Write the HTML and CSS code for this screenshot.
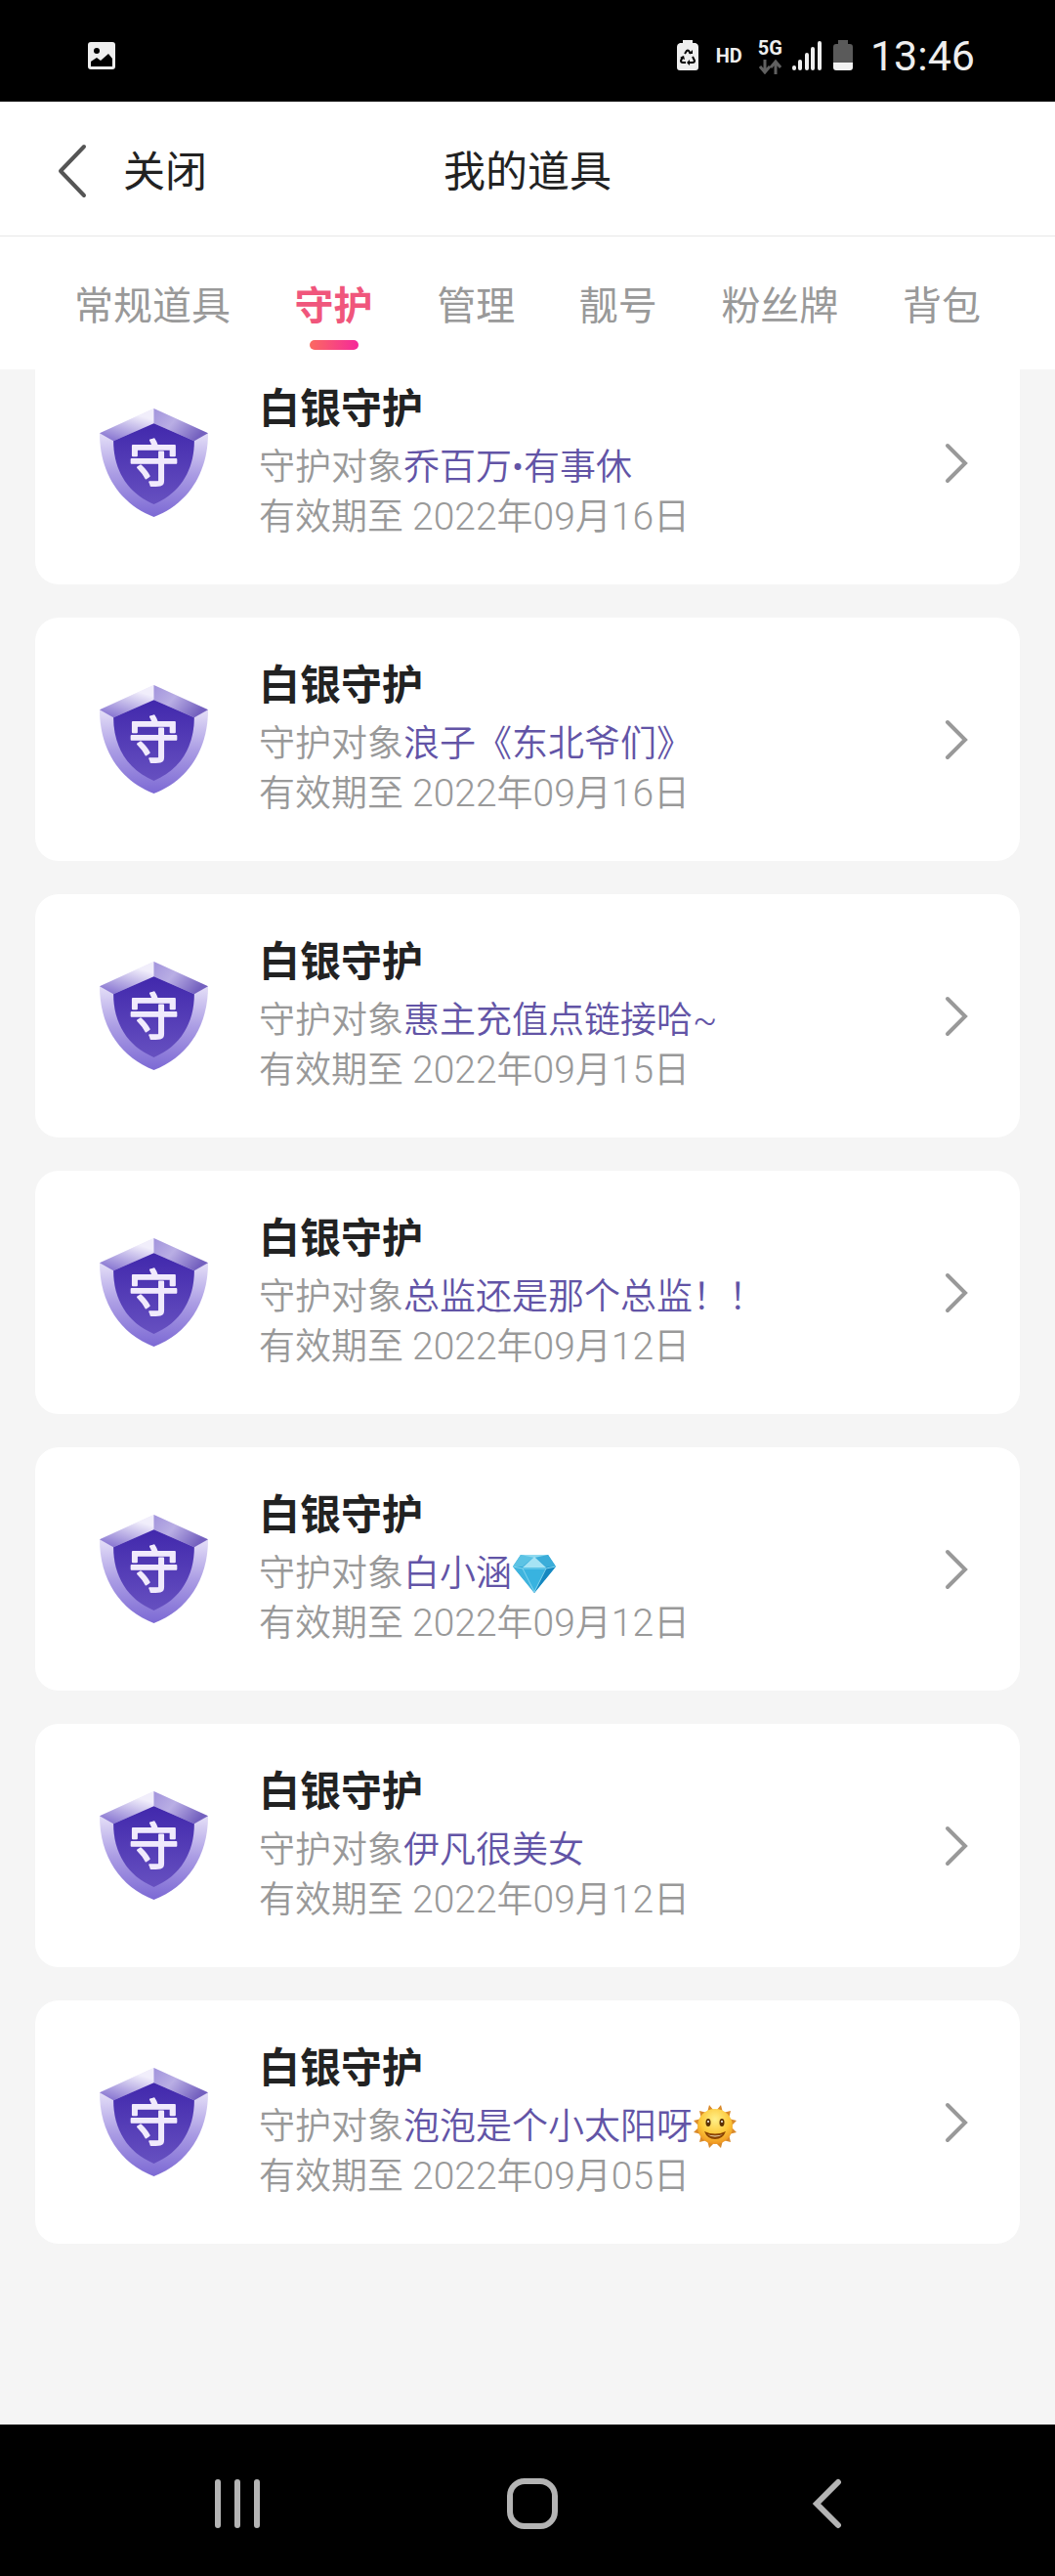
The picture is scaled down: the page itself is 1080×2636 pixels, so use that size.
FILE: index.html
```html
<!DOCTYPE html>
<html lang="zh-CN">
  <head>
    <meta charset="UTF-8" />
    <meta name="viewport" content="width=device-width, initial-scale=1.0" />
    <title>我的道具</title>
    <link rel="stylesheet" href="styles.css">
  </head>
  <body>
    <!-- shared icons -->
    <svg class="defs" width="0" height="0" aria-hidden="true">
      <defs>
        <linearGradient id="gSide" x1="0" y1="0" x2="0" y2="1">
          <stop offset="0.2" stop-color="#e9e4f9" />
          <stop offset="0.6" stop-color="#ab9de4" />
          <stop offset="1" stop-color="#7c69d4" />
        </linearGradient>
        <linearGradient id="gTopLeft" x1="0.7" y1="0.2" x2="0.3" y2="1">
          <stop offset="0" stop-color="#f1eefb" />
          <stop offset="1" stop-color="#8a78d2" />
        </linearGradient>
        <linearGradient id="gTopRight" x1="0" y1="0" x2="1" y2="0.5">
          <stop offset="0" stop-color="#a294dc" />
          <stop offset="0.45" stop-color="#b9aee4" />
          <stop offset="1" stop-color="#7461bf" />
        </linearGradient>
        <linearGradient id="gInner" x1="0" y1="0" x2="0" y2="1">
          <stop offset="0" stop-color="#4128ac" />
          <stop offset="1" stop-color="#6650c0" />
        </linearGradient>
        <radialGradient id="gSun" cx="0.5" cy="0.3" r="0.7">
          <stop offset="0" stop-color="#fff08a" />
          <stop offset="0.6" stop-color="#fdc93a" />
          <stop offset="1" stop-color="#ee9420" />
        </radialGradient>
      </defs>
      <symbol id="shield" viewBox="0 0 110 110">
        <path d="M0 25L55 0L110 25C110 66 89 97 55 110C21 97 0 66 0 25Z" fill="url(#gSide)" />
        <path d="M0 25L55 0V15L14 33Z" fill="url(#gTopLeft)" />
        <path d="M110 25L55 0V15L96 33Z" fill="url(#gTopRight)" />
        <path d="M14 33L55 15L96 33C96 62 82 86 55 97C28 86 14 62 14 33Z" fill="url(#gInner)" />
      </symbol>
      <symbol id="arrow" viewBox="0 0 26 42">
        <path d="M4 3L22 21L4 39" fill="none" stroke="#999" stroke-width="4" stroke-linecap="round" />
      </symbol>
    </svg>

    <div class="status-bar">
      <svg class="status-photo" width="28" height="28" viewBox="0 0 28 28" role="img" aria-label="图片">
        <rect width="28" height="28" rx="3" fill="#eee" />
        <circle cx="9" cy="9" r="3" fill="#000" />
        <path d="M3 25V20L9 16L13 19L21 12L25 17V25Z" fill="#000" />
      </svg>
      <div class="status-icons">
        <svg width="22" height="32" viewBox="0 0 22 32" aria-hidden="true">
          <path d="M6 0H16V3H19Q22 4 22 7V28Q22 31 19 31H3Q0 31 0 28V7Q0 4 3 3H6Z" fill="#eee" />
          <path d="M8 14L10 11Q11 10 12 11L14 14M16 17L18 21Q18 23 16 23H13M9 23H6Q4 23 4 21L6 17" fill="none" stroke="#000" stroke-width="2" />
          <path d="M12 14H16V10ZM13 20V26L10 23ZM3 18L7 16L8 20Z" fill="#000" />
        </svg>
        <span class="hd">HD</span>
        <div class="network">
          <span>5G</span>
          <svg width="23" height="15" viewBox="0 0 23 15" aria-hidden="true">
            <path d="M6 0V12M1 7L6 13L11 7M17 15V3M12 8L17 2L22 8" fill="none" stroke="#606060" stroke-width="3" />
          </svg>
        </div>
        <svg class="signal" width="30" height="30" viewBox="0 0 30 30" aria-hidden="true">
          <path d="M2 27V28M8 21V28M15 14V28M21 8V28M28 2V28" stroke="#eee" stroke-width="4" stroke-linecap="round" />
        </svg>
        <svg class="battery" width="20" height="32" viewBox="0 0 20 32" aria-hidden="true">
          <path d="M5 0H15V4H17Q20 4 20 7V24H0V7Q0 4 3 4H5Z" fill="#5a5a5a" />
          <path d="M0 23H20V28Q20 31 17 31H3Q0 31 0 28Z" fill="#f2f2f2" />
        </svg>
        <span class="clock">13:46</span>
      </div>
    </div>

    <header class="header">
      <button class="close" type="button">
        <svg width="34" height="60" viewBox="0 0 34 60" aria-hidden="true">
          <path d="M30 3L6 28L30 53" fill="none" stroke="#555" stroke-width="4" stroke-linecap="round" stroke-linejoin="round" />
        </svg>
        <span>关闭</span>
      </button>
      <h1>我的道具</h1>
    </header>

    <nav class="tabs">
      <a href="#props">常规道具</a>
      <a class="active" href="#guard">守护</a>
      <a href="#manage">管理</a>
      <a href="#number">靓号</a>
      <a href="#fans">粉丝牌</a>
      <a href="#bag">背包</a>
    </nav>

    <main class="list">
      <a class="card" href="#1">
        <svg class="shield" viewBox="0 0 110 110"><use href="#shield" /><text x="55" y="74">守</text></svg>
        <div class="info">
          <h2>白银守护</h2>
          <p>守护对象<span class="name">乔百万•有事休</span></p>
          <p>有效期至 <span class="num">2022</span>年<span class="num">09</span>月<span class="num">16</span>日</p>
        </div>
        <svg class="arrow"><use href="#arrow" /></svg>
      </a>
      <a class="card" href="#2">
        <svg class="shield" viewBox="0 0 110 110"><use href="#shield" /><text x="55" y="74">守</text></svg>
        <div class="info">
          <h2>白银守护</h2>
          <p>守护对象<span class="name">浪子《东北爷们》</span></p>
          <p>有效期至 <span class="num">2022</span>年<span class="num">09</span>月<span class="num">16</span>日</p>
        </div>
        <svg class="arrow"><use href="#arrow" /></svg>
      </a>
      <a class="card" href="#3">
        <svg class="shield" viewBox="0 0 110 110"><use href="#shield" /><text x="55" y="74">守</text></svg>
        <div class="info">
          <h2>白银守护</h2>
          <p>守护对象<span class="name">惠主充值点链接哈~</span></p>
          <p>有效期至 <span class="num">2022</span>年<span class="num">09</span>月<span class="num">15</span>日</p>
        </div>
        <svg class="arrow"><use href="#arrow" /></svg>
      </a>
      <a class="card" href="#4">
        <svg class="shield" viewBox="0 0 110 110"><use href="#shield" /><text x="55" y="74">守</text></svg>
        <div class="info">
          <h2>白银守护</h2>
          <p>守护对象<span class="name">总监还是那个总监！！</span></p>
          <p>有效期至 <span class="num">2022</span>年<span class="num">09</span>月<span class="num">12</span>日</p>
        </div>
        <svg class="arrow"><use href="#arrow" /></svg>
      </a>
      <a class="card" href="#5">
        <svg class="shield" viewBox="0 0 110 110"><use href="#shield" /><text x="55" y="74">守</text></svg>
        <div class="info">
          <h2>白银守护</h2>
          <p>守护对象<span class="name">白小涵<svg class="emoji" viewBox="0 0 46 46" role="img" aria-label="钻石">
            <path d="M9 4H37L45 16L23 43L1 16Z" fill="#2fa5d6" />
            <path d="M9 4L1 16H11L23 6Z" fill="#5cc3e4" />
            <path d="M37 4L45 16H35L23 6Z" fill="#3badd9" />
            <path d="M9 4H37L23 7Z" fill="#8fdaf0" />
            <path d="M23 6L35 17H11Z" fill="#a6e3f4" />
            <path d="M1 16L11 17L23 43Z" fill="#3fb4de" />
            <path d="M11 17H35L23 43Z" fill="#38b3e0" />
            <path d="M45 16L35 17L23 43Z" fill="#1688c0" />
            <path d="M1 16L11 18H35L45 16M11 18L23 42L35 18" fill="none" stroke="#83d5ef" stroke-width="1" />
          </svg></span></p>
          <p>有效期至 <span class="num">2022</span>年<span class="num">09</span>月<span class="num">12</span>日</p>
        </div>
        <svg class="arrow"><use href="#arrow" /></svg>
      </a>
      <a class="card" href="#6">
        <svg class="shield" viewBox="0 0 110 110"><use href="#shield" /><text x="55" y="74">守</text></svg>
        <div class="info">
          <h2>白银守护</h2>
          <p>守护对象<span class="name">伊凡很美女</span></p>
          <p>有效期至 <span class="num">2022</span>年<span class="num">09</span>月<span class="num">12</span>日</p>
        </div>
        <svg class="arrow"><use href="#arrow" /></svg>
      </a>
      <a class="card" href="#7">
        <svg class="shield" viewBox="0 0 110 110"><use href="#shield" /><text x="55" y="74">守</text></svg>
        <div class="info">
          <h2>白银守护</h2>
          <p>守护对象<span class="name">泡泡是个小太阳呀<svg class="emoji" viewBox="0 0 46 46" role="img" aria-label="太阳">
            <path d="M17 1L22 7H24L29 1L31 9L39 7L37 15L45 17L40 22V24L45 29L37 31L39 39L31 37L29 45L24 40H22L17 45L15 37L7 39L9 31L1 29L6 24V22L1 17L9 15L7 7L15 9Z" fill="#d98a2b" />
            <circle cx="23" cy="23" r="18" fill="url(#gSun)" />
            <ellipse cx="16" cy="19" rx="2.5" ry="4" fill="#5a3000" />
            <ellipse cx="30" cy="19" rx="2.5" ry="4" fill="#5a3000" />
            <circle cx="16" cy="18" r="1" fill="#fff" />
            <circle cx="30" cy="18" r="1" fill="#fff" />
            <path d="M12 28Q23 33 34 28Q31 36 23 36Q15 36 12 28Z" fill="#8a4300" />
            <path d="M15 31Q23 34 31 31Q23 36 15 31Z" fill="#fff3d0" />
          </svg></span></p>
          <p>有效期至 <span class="num">2022</span>年<span class="num">09</span>月<span class="num">05</span>日</p>
        </div>
        <svg class="arrow"><use href="#arrow" /></svg>
      </a>
    </main>

    <footer class="nav-bar">
      <button type="button" aria-label="最近任务">
        <svg width="56" height="56" viewBox="0 0 56 56">
          <path d="M8 6V50M28 6V50M48 6V50" stroke="#b4b4b4" stroke-width="6" stroke-linecap="round" />
        </svg>
      </button>
      <button type="button" aria-label="主页">
        <svg width="56" height="56" viewBox="0 0 56 56">
          <rect x="5" y="5" width="46" height="46" rx="15" fill="none" stroke="#b4b4b4" stroke-width="6" />
        </svg>
      </button>
      <button type="button" aria-label="返回">
        <svg width="56" height="56" viewBox="0 0 56 56">
          <path d="M39 6L17 28L39 50" fill="none" stroke="#b4b4b4" stroke-width="6" stroke-linecap="round" />
        </svg>
      </button>
    </footer>
  </body>
</html>
```
FILE: styles.css
```css
* {
  box-sizing: border-box;
}

body {
  margin: 0;
  min-height: 100vh;
  display: flex;
  flex-direction: column;
  background: #f5f5f5;
  color: #222;
  font-family: Roboto, "Noto Sans CJK SC", sans-serif;
}

h1,
h2,
p {
  margin: 0;
}

a {
  color: inherit;
  text-decoration: none;
}

button {
  border: none;
  padding: 0;
  background: none;
  color: inherit;
  font: inherit;
  cursor: pointer;
}

svg {
  flex-shrink: 0;
}

.defs {
  position: absolute;
}

.status-bar {
  height: 104px;
  padding: 10px 82px 0 90px;
  display: flex;
  align-items: center;
  justify-content: space-between;
  background: #000;
  color: #eee;
}

.status-icons {
  display: flex;
  align-items: center;
}

.hd {
  margin: 0 16px 0 18px;
  font-size: 20px;
  font-weight: 700;
}

.network {
  display: flex;
  flex-direction: column;
  align-items: center;
  gap: 2px;
  font-size: 20px;
  font-weight: 700;
  line-height: 20px;
}

.signal {
  margin: 0 12px 0 10px;
}

.clock {
  margin-left: 18px;
  font-size: 43px;
  line-height: 50px;
}

.header {
  padding: 40px 56px 32px;
  display: grid;
  grid-template-columns: 1fr auto 1fr;
  align-items: center;
  background: #fff;
  border-bottom: 1px solid #e8e8e8;
}

.header h1,
.close {
  font-size: 43px;
  font-weight: 400;
  line-height: 65px;
}

.close {
  justify-self: start;
  display: flex;
  align-items: center;
  gap: 36px;
}

.tabs {
  position: relative;
  z-index: 1;
  padding: 44px 76px 20px;
  display: flex;
  justify-content: space-between;
  background: #fff;
  color: #999;
  font-size: 40px;
  line-height: 56px;
}

.tabs a {
  padding-bottom: 16px;
}

.tabs .active {
  position: relative;
  color: #f0567c;
  font-weight: 700;
}

.tabs .active::after {
  content: "";
  position: absolute;
  left: 50%;
  bottom: 0;
  width: 50px;
  height: 10px;
  margin-left: -25px;
  border-radius: 5px;
  background: linear-gradient(90deg, #fb6a61, #f5289a);
}

/* list is scrolled a little, the first card goes under the tabs */
.list {
  flex: 1;
  margin-top: -29px;
  padding: 0 36px 60px;
  display: flex;
  flex-direction: column;
  gap: 34px;
}

.card {
  padding: 36px 52px 36px 66px;
  display: flex;
  align-items: center;
  background: #fff;
  border-radius: 24px;
}

.shield {
  width: 111px;
  height: 111px;
  margin-right: 52px;
}

.shield text {
  font-family: "Noto Sans CJK SC", sans-serif;
  font-size: 51px;
  font-weight: 400;
  text-anchor: middle;
  fill: #f0eafc;
  stroke: #f0eafc;
  stroke-width: 2px;
  stroke-linejoin: round;
}

.info {
  flex: 1;
  padding-bottom: 7px;
  color: #999;
  font-size: 37px;
  font-weight: 350;
  line-height: 51px;
}

.info h2 {
  color: #222;
  font-size: 42px;
  font-weight: 700;
  line-height: 68px;
}

.name {
  color: #6254a6;
}

.num {
  font-size: 39px;
  font-weight: 300;
  line-height: 1;
}

.emoji {
  width: 46px;
  height: 46px;
  vertical-align: middle;
  margin: -11px 0 -5px;
}

.arrow {
  width: 26px;
  height: 42px;
}

.nav-bar {
  height: 155px;
  padding: 6px 205px 0 215px;
  display: flex;
  align-items: center;
  justify-content: space-between;
  background: #000;
}

.nav-bar svg {
  display: block;
}
```
